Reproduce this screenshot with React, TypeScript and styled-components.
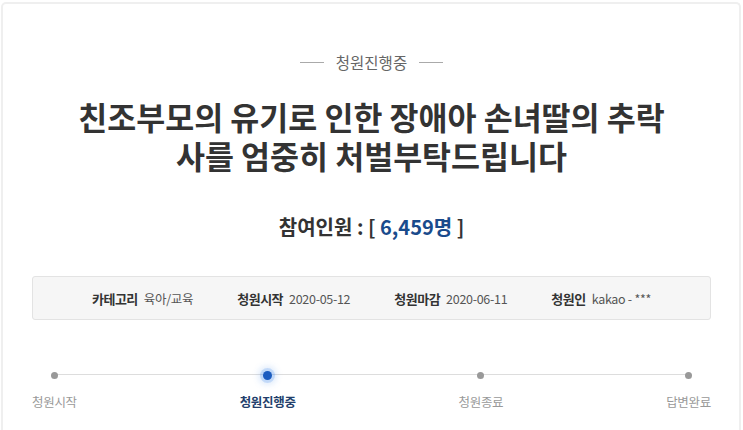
import React from "react";
import styled, { createGlobalStyle } from "styled-components";

const Global = createGlobalStyle`
  html, body { margin: 0; padding: 0; background: #fff; }
  body { font-family: "Noto Sans CJK KR", "Noto Sans", sans-serif; }
  * { box-sizing: border-box; }
`;

const Frame = styled.div`
  margin: 2px 2px 0 1px;
  border: 2px solid #efefef;
  border-bottom: none;
  border-radius: 5px 5px 0 0;
  height: 440px;
  padding: 48px 28px 0 29px;
  display: flex;
  flex-direction: column;
  align-items: center;
`;

const Status = styled.div`
  display: flex;
  align-items: center;
  gap: 12px;
  font-size: 15.5px;
  line-height: 20px;
  color: #666;
`;

const Dash = styled.span`
  width: 24px;
  height: 1px;
  background: #aaa;
`;

const Title = styled.h1`
  margin: 25px 0 0 0;
  max-width: 610px;
  font-size: 31.5px;
  line-height: 39px;
  font-weight: 700;
  color: #333;
  text-align: center;
  word-break: break-all;
`;

const Count = styled.div`
  margin-top: 39px;
  font-size: 20px;
  line-height: 26px;
  font-weight: 700;
  color: #333;
`;

const Num = styled.span`
  color: #1a4b8c;
`;

const InfoBox = styled.div`
  margin-top: 36px;
  align-self: stretch;
  height: 44px;
  background: #f6f6f6;
  border: 1px solid #e3e3e3;
  border-radius: 3px;
  display: flex;
  justify-content: center;
  align-items: center;
  gap: 44px;
  color: #444;
`;

const InfoItem = styled.div`
  display: flex;
  align-items: center;
  gap: 6px;
`;

const InfoLabel = styled.span`
  font-size: 13px;
  font-weight: 700;
  color: #333;
  letter-spacing: -0.5px;
`;

const InfoValue = styled.span`
  font-size: 12.5px;
  color: #555;
  letter-spacing: -0.3px;
`;

const Steps = styled.div`
  position: relative;
  margin-top: 47px;
  align-self: stretch;
  display: flex;
  justify-content: space-between;
`;

const Track = styled.div`
  position: absolute;
  top: 7px;
  left: 22px;
  right: 22px;
  height: 1px;
  background: #ddd;
`;

const Step = styled.div`
  position: relative;
  display: flex;
  flex-direction: column;
  align-items: center;
  gap: 10px;
`;

const DotWrap = styled.div`
  height: 16px;
  display: flex;
  align-items: center;
  justify-content: center;
`;

const Dot = styled.span<{ $active?: boolean }>`
  width: ${(p) => (p.$active ? 9 : 7)}px;
  height: ${(p) => (p.$active ? 9 : 7)}px;
  border-radius: 50%;
  background: ${(p) => (p.$active ? "#1b5cc0" : "#999")};
  box-shadow: ${(p) => (p.$active ? "0 0 0 3px rgba(70,140,235,0.22), 0 0 6px 5px rgba(70,140,235,0.18)" : "none")};
`;

const StepLabel = styled.span<{ $active?: boolean }>`
  font-size: 12.5px;
  line-height: 18px;
  font-weight: ${(p) => (p.$active ? 700 : 400)};
  color: ${(p) => (p.$active ? "#233f6c" : "#999")};
  letter-spacing: -0.3px;
`;

const steps = [
  { label: "청원시작" },
  { label: "청원진행중", active: true },
  { label: "청원종료" },
  { label: "답변완료" },
];

const info = [
  ["카테고리", "육아/교육"],
  ["청원시작", "2020-05-12"],
  ["청원마감", "2020-06-11"],
  ["청원인", "kakao - ***"],
];

export default function App() {
  return (
    <>
      <Global />
      <Frame>
        <Status>
          <Dash />
          청원진행중
          <Dash />
        </Status>
        <Title>친조부모의 유기로 인한 장애아 손녀딸의 추락사를 엄중히 처벌부탁드립니다</Title>
        <Count>
          참여인원 : [ <Num>6,459명</Num> ]
        </Count>
        <InfoBox>
          {info.map(([l, v]) => (
            <InfoItem key={l}>
              <InfoLabel>{l}</InfoLabel>
              <InfoValue>{v}</InfoValue>
            </InfoItem>
          ))}
        </InfoBox>
        <Steps>
          <Track />
          {steps.map((s) => (
            <Step key={s.label}>
              <DotWrap>
                <Dot $active={s.active} />
              </DotWrap>
              <StepLabel $active={s.active}>{s.label}</StepLabel>
            </Step>
          ))}
        </Steps>
      </Frame>
    </>
  );
}
